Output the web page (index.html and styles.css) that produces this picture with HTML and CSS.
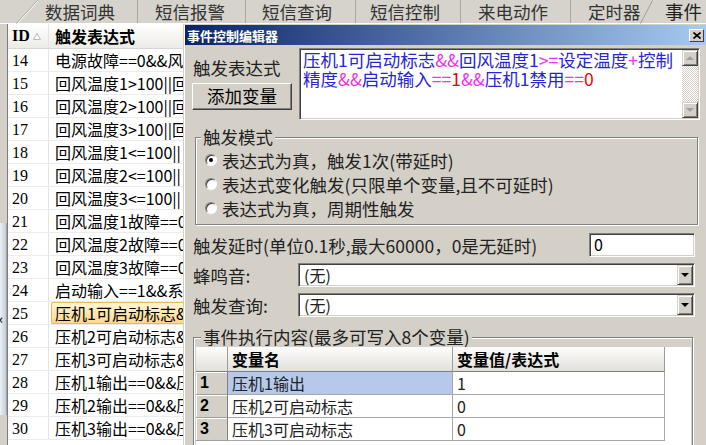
FILE: index.html
```html
<!DOCTYPE html>
<html lang="zh-CN">
<head>
    <meta charset="UTF-8">
    <title>事件控制编辑器</title>
    <link rel="stylesheet" href="styles.css">
</head>
<body>
<div class="tabs">
    <svg class="slant first" width="22" height="24"><path d="M0.5 23.5 L21.5 0.5" stroke="#a19e96" fill="none"/><path d="M1.5 23.5 L22.5 0.5" stroke="#fff" fill="none"/></svg>
    <div class="tab t1">数据词典</div>
    <div class="tab t2">短信报警</div>
    <div class="tab t3">短信查询</div>
    <div class="tab t4">短信控制</div>
    <div class="tab t5">来电动作</div>
    <div class="tab t6">定时器</div>
    <svg class="slant" width="13" height="24"><path d="M0.5 23.5 L12.5 0.5" stroke="#a19e96" fill="none"/></svg>
    <div class="tab t7">事件</div>
</div>

<div class="main">
    <div class="side"><div class="grip">‹</div></div>

    <div class="list">
        <div class="list-head">
            <div class="c-id">ID<svg class="sort" width="8" height="7"><path d="M0.5 6.5 L4 0.5 L7.5 6.5 Z" fill="#fff" stroke="#b8b8b8"/></svg></div>
            <div class="c-expr">触发表达式</div>
        </div>
        <div class="row"><div class="c-id">14</div><div class="c-expr">电源故障==0&amp;&amp;风</div></div>
        <div class="row"><div class="c-id">15</div><div class="c-expr">回风温度1&gt;100||回</div></div>
        <div class="row"><div class="c-id">16</div><div class="c-expr">回风温度2&gt;100||回</div></div>
        <div class="row"><div class="c-id">17</div><div class="c-expr">回风温度3&gt;100||回</div></div>
        <div class="row"><div class="c-id">18</div><div class="c-expr">回风温度1&lt;=100||</div></div>
        <div class="row"><div class="c-id">19</div><div class="c-expr">回风温度2&lt;=100||</div></div>
        <div class="row"><div class="c-id">20</div><div class="c-expr">回风温度3&lt;=100||</div></div>
        <div class="row"><div class="c-id">21</div><div class="c-expr">回风温度1故障==0</div></div>
        <div class="row"><div class="c-id">22</div><div class="c-expr">回风温度2故障==0</div></div>
        <div class="row"><div class="c-id">23</div><div class="c-expr">回风温度3故障==0</div></div>
        <div class="row"><div class="c-id">24</div><div class="c-expr">启动输入==1&amp;&amp;系</div></div>
        <div class="row sel"><div class="c-id">25</div><div class="c-expr">压机1可启动标志&amp;</div></div>
        <div class="row"><div class="c-id">26</div><div class="c-expr">压机2可启动标志&amp;</div></div>
        <div class="row"><div class="c-id">27</div><div class="c-expr">压机3可启动标志&amp;</div></div>
        <div class="row"><div class="c-id">28</div><div class="c-expr">压机1输出==0&amp;&amp;压</div></div>
        <div class="row"><div class="c-id">29</div><div class="c-expr">压机2输出==0&amp;&amp;压</div></div>
        <div class="row"><div class="c-id">30</div><div class="c-expr">压机3输出==0&amp;&amp;压</div></div>
    </div>

    <div class="dialog">
        <div class="title">
            <span>事件控制编辑器</span>
            <div class="close"><svg width="8" height="7"><path d="M0.5 0.5 L7.5 6.5 M7.5 0.5 L0.5 6.5" stroke="#000" stroke-width="1.6"/></svg></div>
        </div>

        <div class="dbody">
            <div class="expr">
                <div class="expr-left">
                    <div class="lbl">触发表达式</div>
                    <div class="btn">添加变量</div>
                </div>
                <div class="memo">
                    <div class="memo-text">
                        <div class="line"><span class="v">压机1可启动标志</span><span class="op">&amp;&amp;</span><span class="v">回风温度1</span><span class="op">&gt;=</span><span class="v">设定温度</span><span class="op">+</span><span class="v">控制</span></div>
                        <div class="line"><span class="v">精度</span><span class="op">&amp;&amp;</span><span class="v">启动输入</span><span class="op">==</span><span class="num">1</span><span class="op">&amp;&amp;</span><span class="v">压机1禁用</span><span class="op">==</span><span class="num">0</span></div>
                    </div>
                    <div class="vscroll">
                        <div class="sbtn"><span class="arr-up"></span></div>
                        <div class="track"></div>
                        <div class="sbtn"><span class="arr-down"></span></div>
                    </div>
                </div>
            </div>

            <fieldset class="group g1">
                <legend>触发模式</legend>
                <div class="opt"><span class="radio on"></span>表达式为真，触发1次(带延时)</div>
                <div class="opt"><span class="radio"></span>表达式变化触发(只限单个变量,且不可延时)</div>
                <div class="opt"><span class="radio"></span>表达式为真，周期性触发</div>
            </fieldset>

            <div class="field delay">
                <div class="flabel">触发延时(单位0.1秒,最大60000，0是无延时)</div>
                <div class="edit">0</div>
            </div>
            <div class="field">
                <div class="flabel short">蜂鸣音:</div>
                <div class="combo"><span class="ctext">(无)</span><div class="dd"><span class="arr-down dark"></span></div></div>
            </div>
            <div class="field">
                <div class="flabel short">触发查询:</div>
                <div class="combo"><span class="ctext">(无)</span><div class="dd"><span class="arr-down dark"></span></div></div>
            </div>

            <fieldset class="group g2">
                <legend>事件执行内容(最多可写入8个变量)</legend>
                <div class="grid">
                    <div class="g-row g-head">
                        <div class="g-num"></div>
                        <div class="g-c1">变量名</div>
                        <div class="g-c2">变量值/表达式</div>
                    </div>
                    <div class="g-row">
                        <div class="g-num">1</div>
                        <div class="g-c1 picked">压机1输出</div>
                        <div class="g-c2">1</div>
                    </div>
                    <div class="g-row">
                        <div class="g-num">2</div>
                        <div class="g-c1">压机2可启动标志</div>
                        <div class="g-c2">0</div>
                    </div>
                    <div class="g-row">
                        <div class="g-num">3</div>
                        <div class="g-c1">压机3可启动标志</div>
                        <div class="g-c2">0</div>
                    </div>
                </div>
            </fieldset>
        </div>
    </div>
</div>
</body>
</html>
```

FILE: styles.css
```css
* {
    box-sizing: border-box;
}

body {
    margin: 0;
    width: 706px;
    height: 445px;
    overflow: hidden;
    background: #d4d0c8;
    font-family: "Noto Sans CJK SC", "Liberation Sans", sans-serif;
    color: #000;
}

/* tab strip */
.tabs {
    display: flex;
    height: 24px;
    background: #d6d3cd;
    border-bottom: 1px solid #fff;
}
.slant {
    display: block;
    flex: none;
}
.slant.first {
    margin-left: 16px;
}
.tab {
    flex: none;
    font-size: 17.5px;
    line-height: 23px;
    color: #333;
    white-space: nowrap;
    border-left: 1px solid #aaa79f;
}
.t1 { width: 99px; padding-left: 7px; border-left: none; }
.t2 { width: 108px; padding-left: 17px; }
.t3 { width: 110px; padding-left: 16px; }
.t4 { width: 105px; padding-left: 14px; }
.t5 { width: 110px; padding-left: 17px; }
.t6 { width: 70px; padding-left: 17px; }
.t7 { flex: 1; min-width: 0; padding-left: 12px; border-left: none; color: #222; font-size: 18.5px; }

/* left list */
.main {
    display: flex;
    height: 421px;
}
.side {
    width: 8px;
    flex: none;
    border-right: 1px solid #7c7c7c;
    padding-top: 199px;
}
.grip {
    height: 192px;
    background: linear-gradient(90deg, #eef2f6, #c3ccd6);
    border-right: 1px solid #9aa6b2;
    font-size: 13px;
    line-height: 12px;
    padding-top: 90px;
    color: #222;
    font-weight: bold;
    text-indent: -1px;
}
.list {
    width: 175px;
    flex: none;
    background: #fff;
    overflow: hidden;
    font-size: 16px;
}
.list-head {
    display: flex;
    height: 25px;
    line-height: 24px;
    font-weight: bold;
    background: linear-gradient(#ffffff, #ecebe7);
    border-bottom: 1px solid #d6d6d6;
}
.row {
    display: flex;
    height: 23px;
    line-height: 23px;
    border-bottom: 1px solid #ececec;
}
.c-id {
    width: 41px;
    flex: none;
    padding-left: 4px;
    border-right: 1px solid #e4e4e4;
    font-family: "Liberation Serif", "Noto Sans CJK SC", serif;
}
.list-head .c-id {
    font-family: "Liberation Serif", serif;
}
.sort {
    margin-left: 3px;
    vertical-align: 1px;
}
.c-expr {
    flex: 1;
    min-width: 0;
    padding-left: 6px;
    white-space: nowrap;
    overflow: hidden;
}
.row.sel .c-expr {
    margin-left: 2px;
    padding-left: 3px;
    border: 1px solid #e3bd58;
    border-right: none;
    border-radius: 2px 0 0 2px;
    background: linear-gradient(#fff5d6, #fcd98a);
    line-height: 21px;
}

/* dialog window */
.dialog {
    flex: 1;
    min-width: 0;
    border-top: 1px solid #d4d0c8;
    border-left: 1px solid #d4d0c8;
    box-shadow: inset 1px 1px #fff;
    padding-left: 1px;
}
.title {
    display: flex;
    align-items: center;
    height: 20px;
    padding-left: 2px;
    background: linear-gradient(90deg, #0a246a, #a6caf0);
    color: #fff;
    font-size: 13px;
    font-weight: bold;
}
.close {
    margin-left: auto;
    margin-right: 2px;
    width: 15px;
    height: 13px;
    display: flex;
    align-items: center;
    justify-content: center;
    background: #d4d0c8;
    border: 1px solid;
    border-color: #fff #404040 #404040 #fff;
}
.dbody {
    padding: 0 8px;
    font-size: 17.5px;
}

.expr {
    display: flex;
    gap: 7px;
    height: 72px;
    margin: 3px -2px 0 -1px;
}
.expr-left {
    width: 100px;
    flex: none;
}
.lbl {
    margin-top: 10px;
    line-height: 20px;
    padding-left: 1px;
    color: #222;
}
.btn {
    margin-top: 5px;
    height: 27px;
    line-height: 24px;
    text-align: center;
    background: #d4d0c8;
    border: 1px solid;
    border-color: #fff #404040 #404040 #fff;
    box-shadow: inset -1px -1px #808080;
}
.memo {
    flex: 1;
    display: flex;
    background: #fff;
    border: 1px solid;
    border-color: #808080 #fff #fff #808080;
    box-shadow: inset 1px 1px #404040, inset -1px -1px #d4d0c8;
    padding: 1px;
}
.memo-text {
    flex: 1;
    min-width: 0;
    padding: 0 2px;
    line-height: 19px;
    white-space: nowrap;
    overflow: hidden;
}
.v { color: #2626d6; }
.op { color: #f030f0; }
.num { color: #f00000; }

.vscroll {
    width: 16px;
    flex: none;
    display: flex;
    flex-direction: column;
}
.sbtn {
    height: 16px;
    flex: none;
    display: flex;
    align-items: center;
    justify-content: center;
    background: #d4d0c8;
    border: 1px solid;
    border-color: #d4d0c8 #404040 #404040 #d4d0c8;
    box-shadow: inset 1px 1px #fff, inset -1px -1px #808080;
}
.track {
    flex: 1;
    background-image: repeating-conic-gradient(#fff 0 25%, #d4d0c8 0 50%);
    background-size: 2px 2px;
}
.arr-up,
.arr-down {
    width: 0;
    height: 0;
    border-left: 4px solid transparent;
    border-right: 4px solid transparent;
}
.arr-up { border-bottom: 4px solid #a0a0a0; }
.arr-down { border-top: 4px solid #a0a0a0; }
.arr-down.dark { border-top-color: #000; }

/* group boxes */
.group {
    margin: 7px 0 0 2px;
    padding: 0 0 4px;
    min-width: 0;
    border: 1px solid #808080;
    box-shadow: 1px 1px #fff, inset 1px 1px #fff;
}
.group legend {
    margin-left: 5px;
    padding: 0 2px;
    line-height: 20px;
    background: #d4d0c8;
    color: #222;
}
.opt {
    display: flex;
    align-items: center;
    height: 24px;
    padding-left: 9px;
    color: #222;
    white-space: nowrap;
}
.g1 .opt:first-of-type {
    margin-top: 1px;
}
.radio {
    width: 12px;
    height: 12px;
    flex: none;
    margin-right: 5px;
    border-radius: 50%;
    border: 1px solid;
    border-color: #808080 #fff #fff #808080;
    background: #fff;
    box-shadow: inset 1px 1px #404040;
    display: flex;
    align-items: center;
    justify-content: center;
}
.radio.on::after {
    content: "";
    width: 4px;
    height: 4px;
    border-radius: 50%;
    background: #000;
}

/* fields */
.field {
    display: flex;
    align-items: center;
    height: 24px;
    margin: 6px 3px 0 0;
}
.field.delay {
    margin-top: 8px;
}
.flabel {
    flex: 1;
    color: #222;
    white-space: nowrap;
}
.flabel.short {
    flex: none;
    width: 105px;
}
.edit,
.combo {
    height: 24px;
    background: #fff;
    border: 1px solid;
    border-color: #808080 #fff #fff #808080;
    box-shadow: inset 1px 1px #404040, inset -1px -1px #d4d0c8;
}
.edit {
    width: 106px;
    flex: none;
    padding-left: 4px;
    line-height: 21px;
    font-size: 16px;
}
.combo {
    flex: 1;
    display: flex;
    align-items: center;
    padding: 1px;
}
.ctext {
    flex: 1;
    padding-left: 4px;
    font-size: 16px;
    color: #222;
}
.dd {
    width: 16px;
    height: 20px;
    display: flex;
    align-items: center;
    justify-content: center;
    background: #d4d0c8;
    border: 1px solid;
    border-color: #d4d0c8 #404040 #404040 #d4d0c8;
    box-shadow: inset 1px 1px #fff, inset -1px -1px #808080;
}

/* variable grid */
.g2 {
    margin: 10px 5px 0 0;
    padding: 0 1px 0 2px;
}
.grid {
    background: #fff;
    height: 100px;
    font-size: 16px;
}
.g-row {
    display: flex;
    height: 23px;
    line-height: 22px;
}
.g-head {
    height: 25px;
    line-height: 24px;
    font-weight: bold;
}
.g-num {
    width: 32px;
    flex: none;
    padding-left: 4px;
    font-weight: bold;
    background: #d4d0c8;
    border-right: 1px solid #808080;
    border-bottom: 1px solid #a0a0a0;
    box-shadow: inset 1px 1px #fff;
    font-family: "Liberation Sans", sans-serif;
}
.g-c1,
.g-c2 {
    flex: none;
    padding-left: 4px;
    border-right: 1px solid #a8a8a8;
    border-bottom: 1px solid #a8a8a8;
    white-space: nowrap;
    color: #222;
}
.g-c1 { width: 225px; }
.g-c2 { width: 212px; }
.g-head > div {
    background: linear-gradient(#fdfdfd, #e2e0da);
    border-right: 1px solid #9c9c9c;
    border-bottom: 1px solid #808080;
    color: #000;
    box-shadow: none;
}
.picked {
    background: #b6c9ea;
}
```
